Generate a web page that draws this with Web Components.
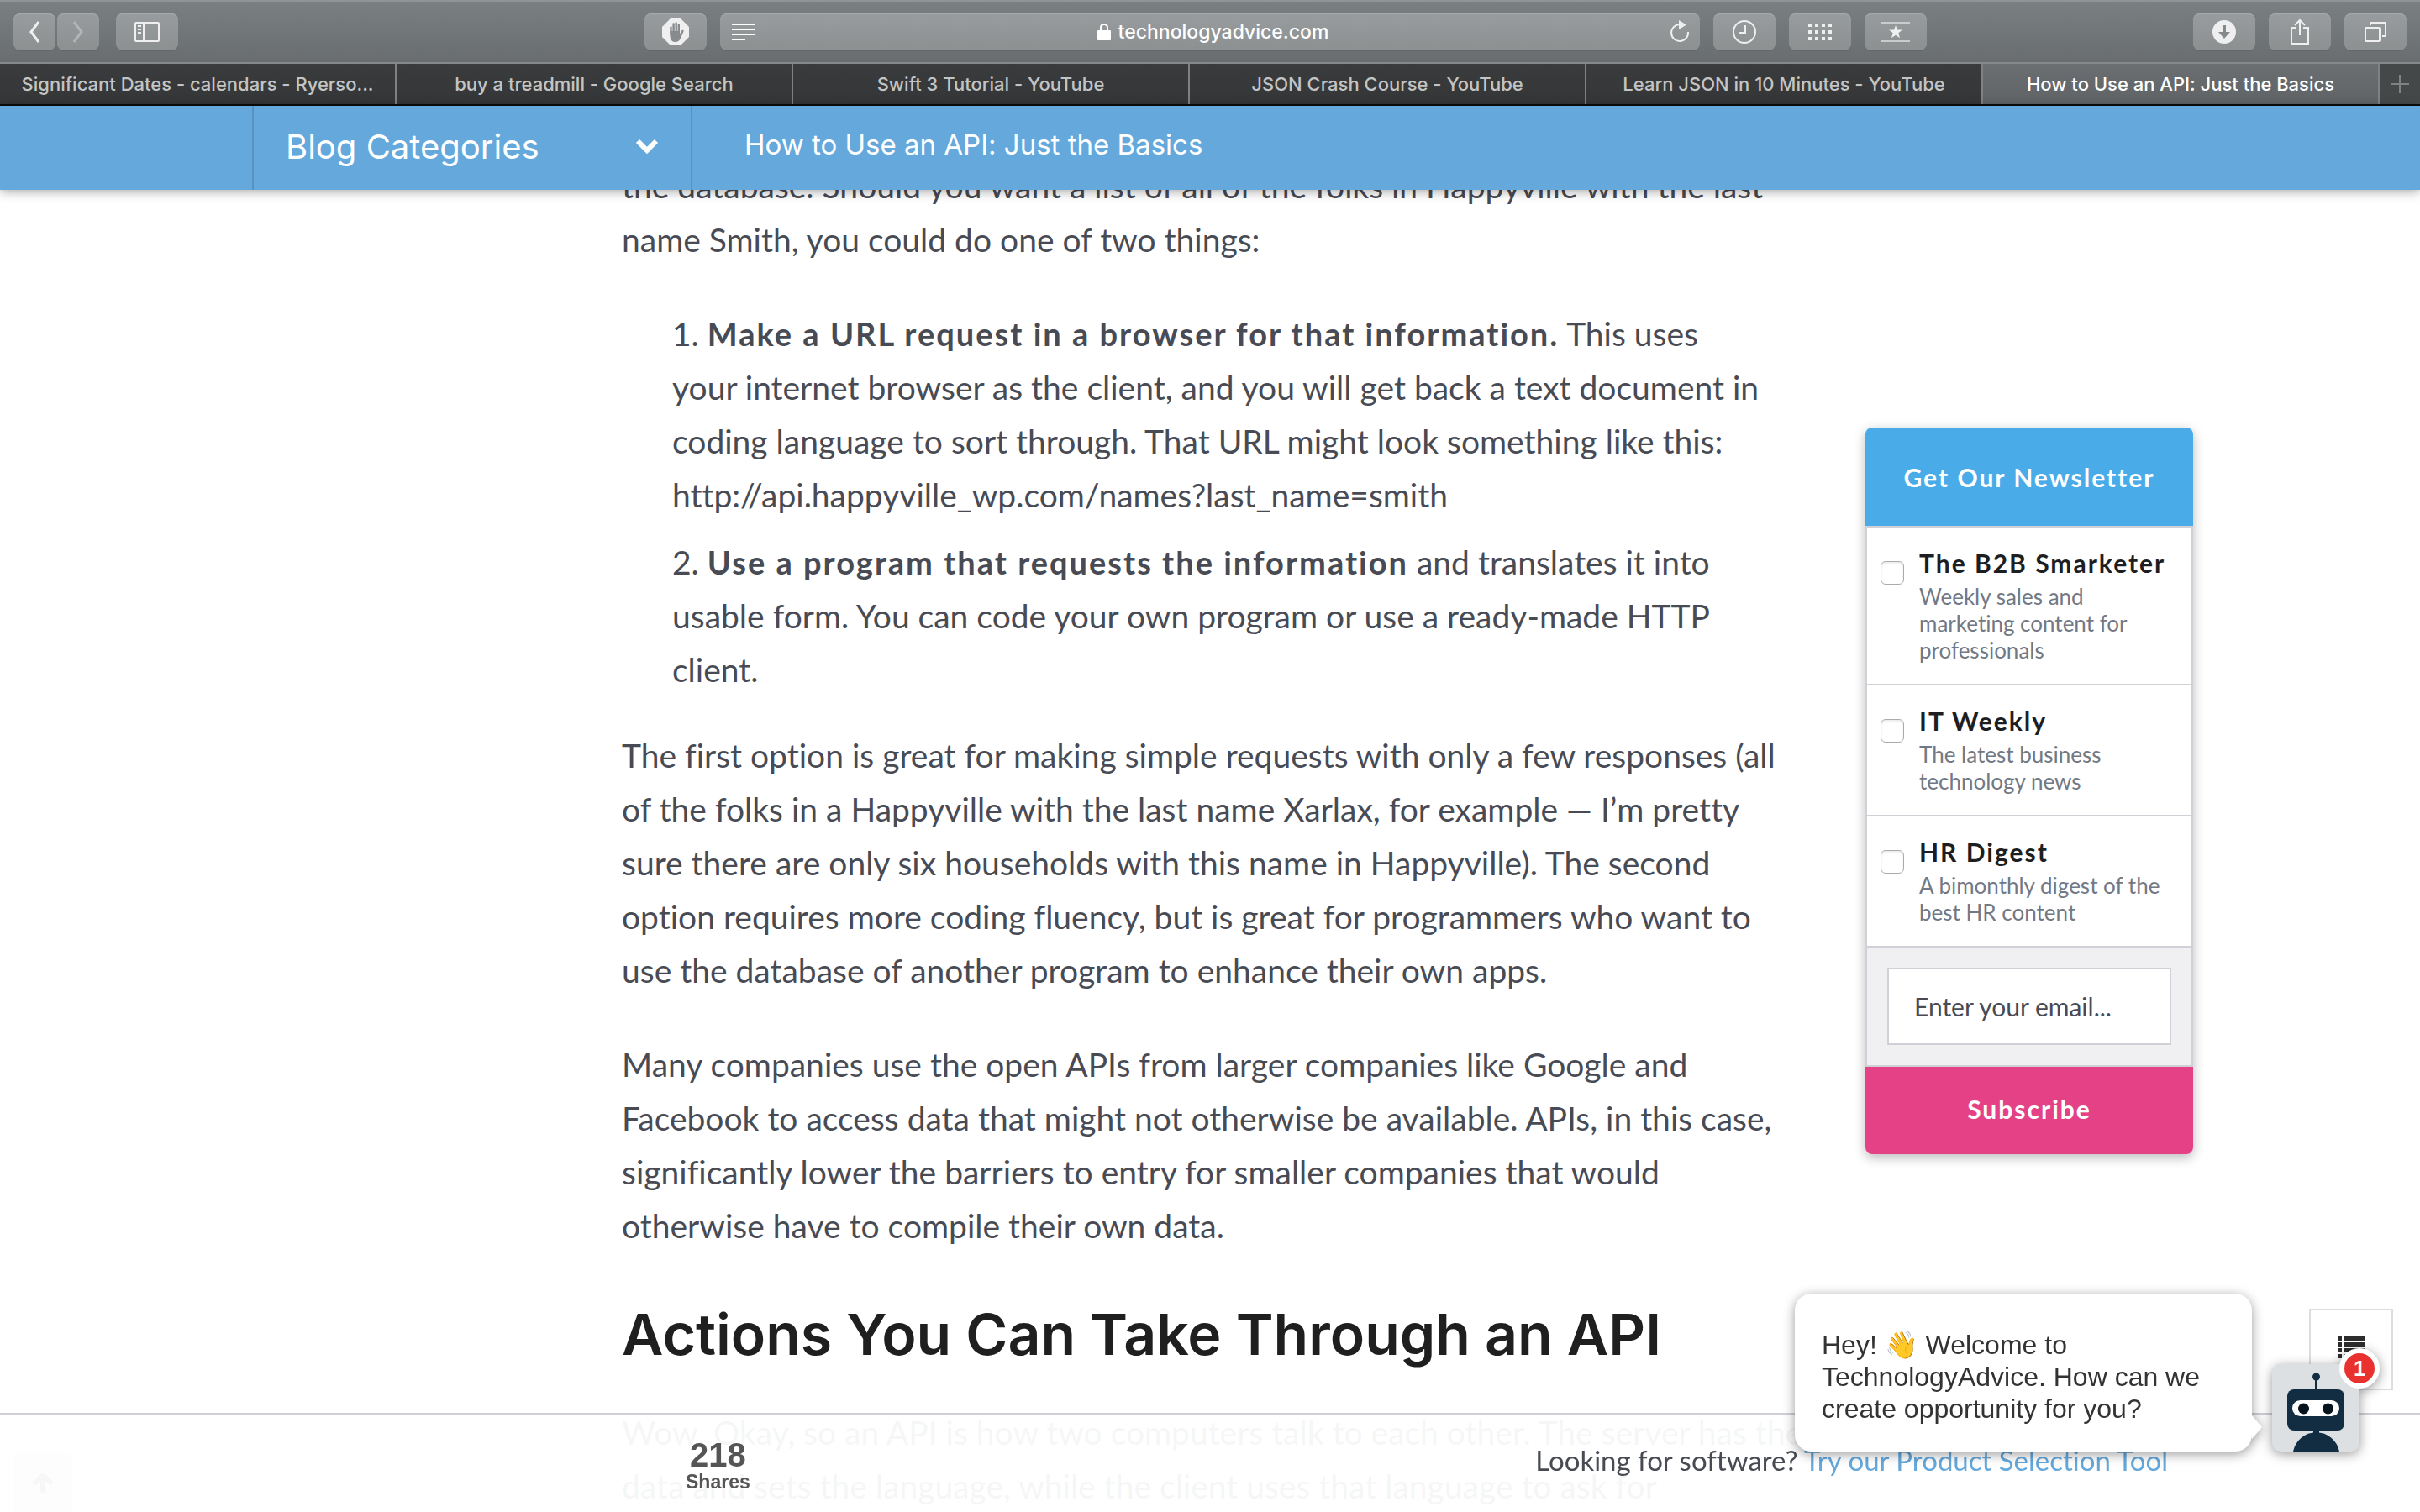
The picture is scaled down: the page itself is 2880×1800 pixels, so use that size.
<!DOCTYPE html>
<html lang="en">
<head>
<meta charset="utf-8">
<title>How to Use an API: Just the Basics</title>
<style>
html, body { margin: 0; height: 100%; }
body { font-family: Lato, "Liberation Sans", sans-serif; font-variant-ligatures: none; background: #fff; color: #484b54; overflow: hidden; }
</style>
</head>
<body>
<app-shell></app-shell>
<script>
const define = (name, html, setup) => customElements.define(name, class extends HTMLElement {
  connectedCallback() {
    if (this.shadowRoot) return;
    const root = this.attachShadow({ mode: 'open' });
    const t = document.createElement('template');
    t.innerHTML = typeof html === 'function' ? html(this) : html;
    root.append(t.content.cloneNode(true));
    if (setup) setup(this, root);
  }
});

define('app-shell', `
<style>
  :host { display: flex; flex-direction: column; height: 100vh; }
  main {
    flex: 1; min-height: 0; overflow: hidden; background: #fff;
    display: grid; grid-template-columns: minmax(0, 740fr) minmax(0, 1372fr) minmax(0, 108fr) 390px minmax(0, 270fr); align-items: start;
  }
  article-body { grid-column: 2; margin-top: -37px; }
  newsletter-card { grid-column: 4; margin-top: 283px; }
</style>
<browser-toolbar></browser-toolbar>
<tab-strip></tab-strip>
<site-nav></site-nav>
<main>
  <article-body></article-body>
  <newsletter-card></newsletter-card>
</main>
<share-bar></share-bar>
<toc-button></toc-button>
<chat-widget></chat-widget>
`);

define('tool-button', el => `
<style>
  :host { display: block; }
  button {
    display: flex; align-items: center; justify-content: center; box-sizing: border-box;
    width: ${el.hasAttribute('narrow') ? 50 : 74}px; height: 44px; padding: 0; border: 0; border-radius: 8px;
    color: #efefef; background: linear-gradient(#989c9e, #8c9091);
    box-shadow: inset 0 1px 0 #a6aaab, 0 1px 0 #63676a;
  }
  button:disabled { color: #b2b5b6; }
</style>
<button type="button" aria-label="${el.getAttribute('label')}" ${el.hasAttribute('off') ? 'disabled' : ''}><slot></slot></button>
`);

define('browser-toolbar', `
<style>
  :host {
    display: flex; align-items: center; box-sizing: border-box; height: 76px; padding: 0 16px;
    background: linear-gradient(#7a7f82, #696d6f); border-top: 2px solid #8f9497; border-bottom: 2px solid #85898b;
    font-family: Inter, sans-serif;
  }
  .group { display: flex; gap: 16px; }
  .pair { display: flex; gap: 2px; margin-right: 4px; }
  .center { flex: 1526; }
  .space-a { flex: 555; } .space-b { flex: 317; }
  .address {
    flex: 1; display: flex; align-items: center; justify-content: space-between; height: 44px; box-sizing: border-box;
    padding: 0 12px 0 14px; border-radius: 8px; color: #fff; font-size: 23px; font-weight: 500;
    background: linear-gradient(#989c9e, #8c9091); box-shadow: inset 0 1px 0 #a6aaab, 0 1px 0 #63676a;
  }
  .url { display: flex; align-items: center; gap: 8px; }
  svg { display: block; fill: none; stroke: currentColor; stroke-width: 2; overflow: visible; }
  .f { fill: currentColor; stroke: none; }
  button { border: 0; padding: 0; background: none; color: #efefef; }
</style>
<div class="group">
  <div class="pair">
    <tool-button narrow label="Back"><svg width="14" height="26" viewBox="0 0 14 26" style="stroke-width:3"><path d="M12 1 3 13l9 12"/></svg></tool-button>
    <tool-button narrow off label="Forward"><svg width="14" height="26" viewBox="0 0 14 26" style="stroke-width:3"><path d="M2 1l9 12-9 12"/></svg></tool-button>
  </div>
  <tool-button label="Sidebar"><svg width="30" height="24" viewBox="0 0 30 24"><rect x="1" y="1" width="28" height="22" rx="1"/><path d="M11 1v22M4 5h4M4 9h4M4 13h4"/></svg></tool-button>
</div>
<div class="space-a"></div>
<div class="group center">
  <tool-button label="Content blocker"><svg width="32" height="32" viewBox="0 0 32 32"><path class="f" d="M10 0h12l10 10v12L22 32H10L0 22V10z"/><path d="M10.500 18V10.500M13.600 17V6.500M16.700 17V5.500M19.800 17V7.500" stroke="#878b8d" stroke-width="2.400" stroke-linecap="round"/><path d="M9.300 15h11.700v3.500l2-3.700q1-1.600 2.200-1 .8.500.2 1.900l-3.400 7.800q-2 4.500-6.300 4.500-4.500 0-5.800-4.500-.6-2-.6-4.500z" fill="#878b8d" stroke="none"/></svg></tool-button>
  <div class="address">
    <svg width="28" height="20" viewBox="0 0 28 20"><path d="M0 1h28M0 7h28M0 13h28M0 19h16"/></svg>
    <div class="url"><svg width="18" height="20" viewBox="0 0 18 20"><rect class="f" x="1" y="8" width="16" height="12" rx="1"/><path d="M5 10V5q0-4 4-4t4 4v5"/></svg><span>technologyadvice.com</span></div>
    <button type="button" aria-label="Reload"><svg width="24" height="26" viewBox="0 0 24 26"><path d="M22 13A10 10 0 1 1 12 4"/><path class="f" d="M11-1l9 5.500-9 5.500z"/></svg></button>
  </div>
  <tool-button label="History"><svg width="28" height="28" viewBox="0 0 28 28"><circle cx="14" cy="14" r="13"/><path d="M15 6v9H8"/></svg></tool-button>
  <tool-button label="Top sites"><svg width="28" height="20" viewBox="0 0 28 20" stroke-dasharray="4 4" style="stroke-width:4"><path d="M0 2h28M0 10h28M0 18h28"/></svg></tool-button>
  <tool-button label="Favourites"><svg width="34" height="24" viewBox="0 0 34 24"><path d="M0 1h34M0 23h34" stroke="#c9cbcc"/><path class="f" d="M17 4l2 5.500h6l-4.700 3.700 1.700 6-5-3.500-5 3.500 1.700-6L9 9.500h6z"/></svg></tool-button>
</div>
<div class="space-b"></div>
<div class="group">
  <tool-button label="Downloads"><svg width="28" height="28" viewBox="0 0 28 28"><circle class="f" cx="14" cy="14" r="14"/><path d="M14 6v10" stroke="#85898b" stroke-width="4"/><path d="M7 14h14l-7 8z" fill="#85898b" stroke="none"/></svg></tool-button>
  <tool-button label="Share"><svg width="22" height="30" viewBox="0 0 22 30"><path d="M7 10H1v19h20V10h-6M11 19V1M5 7l6-6 6 6"/></svg></tool-button>
  <tool-button label="Show all tabs"><svg width="26" height="24" viewBox="0 0 26 24"><rect x="1" y="7" width="17" height="16" rx="1"/><path d="M7 4V1h18v16h-4"/></svg></tool-button>
</div>
`);

define('browser-tab', el => `
<style>
  :host {
    flex: 1; min-width: 0; display: flex; align-items: center; justify-content: center;
    border-right: 2px solid #7e8284; color: #c3c4c4; background: linear-gradient(#3a3b3d, #353638);
    font-size: 22px; font-weight: 500;
  }
  :host([active]) { background: linear-gradient(#6b6f71, #5f6365); color: #fff; }
  span { white-space: nowrap; }
</style>
<span><slot></slot></span>
`);

define('tab-strip', `
<style>
  :host { display: flex; height: 50px; box-sizing: border-box; border-bottom: 2px solid #0c0c0d; background: #454849; font-family: Inter, sans-serif; }
  button { width: 48px; border: 0; padding: 0; background: none; display: flex; align-items: center; justify-content: center; }
</style>
<browser-tab>Significant Dates - calendars - Ryerso...</browser-tab>
<browser-tab>buy a treadmill - Google Search</browser-tab>
<browser-tab>Swift 3 Tutorial - YouTube</browser-tab>
<browser-tab>JSON Crash Course - YouTube</browser-tab>
<browser-tab>Learn JSON in 10 Minutes - YouTube</browser-tab>
<browser-tab active>How to Use an API: Just the Basics</browser-tab>
<button type="button" aria-label="New tab"><svg width="22" height="22" viewBox="0 0 22 22" stroke="#7f8283" stroke-width="2"><path d="M11 0v22M0 11h22"/></svg></button>
`);

define('site-nav', `
<style>
  :host {
    display: flex; height: 100px; background: #64a8dc; color: #fff; position: relative; z-index: 1;
    box-shadow: 0 2px 12px rgba(0,0,0,.35); font-family: Inter, sans-serif;
  }
  .categories {
    margin-left: 300px; width: 524px; box-sizing: border-box; padding: 0 38px 4px 38px; border: 0; border-left: 2px solid #5793c1; border-right: 2px solid #5793c1;
    background: none; color: inherit; font: 400 40px Inter, sans-serif; display: flex; align-items: center; justify-content: space-between;
  }
  .title { margin-left: 62px; display: flex; align-items: center; padding-bottom: 8px; font-size: 33px; }
</style>
<button type="button" class="categories"><span>Blog Categories</span><svg width="28" height="18" viewBox="0 0 28 18" fill="none" stroke="#fff" stroke-width="6"><path d="M3 3l11 11L25 3"/></svg></button>
<div class="title">How to Use an API: Just the Basics</div>
`);

define('article-body', `
<style>
  :host { display: block; font-size: 39px; line-height: 64px; white-space: nowrap; }
  p { margin: 0 0 48px; }
  ol { list-style: none; margin: 0 0 38px; padding: 0 0 0 60px; }
  li { margin: 0 0 16px; }
  li:last-child { margin: 0; }
  b { font-size: 38px; font-weight: 700; letter-spacing: 2px; }
  h2 { margin: 0 0 36px; font: 600 68px/98px Inter, sans-serif; color: #1f1f1f; }
</style>
<p>the database. Should you want a list of all of the folks in Happyville with the last<br>name Smith, you could do one of two things:</p>
<ol>
  <li>1. <b>Make a URL request in a browser for that information.</b> This uses<br>your internet browser as the client, and you will get back a text document in<br>coding language to sort through. That URL might look something like this:<br>http://api.happyville_wp.com/names?last_name=smith</li>
  <li>2. <b>Use a program that requests the information</b> and translates it into<br>usable form. You can code your own program or use a ready-made HTTP<br>client.</li>
</ol>
<p>The first option is great for making simple requests with only a few responses (all<br>of the folks in a Happyville with the last name Xarlax, for example — I’m pretty<br>sure there are only six households with this name in Happyville). The second<br>option requires more coding fluency, but is great for programmers who want to<br>use the database of another program to enhance their own apps.</p>
<p>Many companies use the open APIs from larger companies like Google and<br>Facebook to access data that might not otherwise be available. APIs, in this case,<br>significantly lower the barriers to entry for smaller companies that would<br>otherwise have to compile their own data.</p>
<h2>Actions You Can Take Through an API</h2>
<p>Wow. Okay, so an API is how two computers talk to each other. The server has the<br>data and sets the language, while the client uses that language to ask for</p>
`);

define('newsletter-option', el => `
<style>
  :host { display: block; border: 2px solid #d1d0d6; border-top: 0; background: #fff; }
  label { display: flex; gap: 18px; padding: 18px 0 24px 16px; }
  input {
    appearance: none; flex: none; width: 28px; height: 28px; margin: 22px 0 0; box-sizing: border-box;
    border: 1px solid #ababab; border-radius: 6px; background: #fff; box-shadow: inset 0 2px 3px #ececec;
  }
  strong { display: block; font-size: 30px; line-height: 48px; letter-spacing: 2px; color: #1d1e22; white-space: nowrap; }
  small { display: block; font-size: 26px; line-height: 32px; color: #727984; white-space: nowrap; }
</style>
<label><input type="checkbox"><span><strong>${el.getAttribute('name')}</strong><small><slot></slot></small></span></label>
`);

define('newsletter-card', `
<style>
  :host { display: block; border-radius: 8px; box-shadow: 0 4px 14px rgba(0,0,0,.28); overflow: hidden; }
  header {
    height: 117px; display: flex; align-items: center; justify-content: center; background: #4aabe9; color: #fff;
    border-bottom: 2px solid #d1d0d6; font-size: 30px; font-weight: 700; letter-spacing: 2px;
  }
  .email { background: #f0f0f3; border: 2px solid #d1d0d6; border-top: 0; padding: 24px; }
  input {
    display: block; box-sizing: border-box; width: 100%; height: 92px; border: 2px solid #d1d0d6; border-radius: 0; background: #fff;
    padding: 0 30px; font: 30px Lato, sans-serif; color: #484b54;
  }
  input::placeholder { color: #484b54; opacity: 1; }
  button {
    display: block; width: 100%; height: 104px; border: 0; padding: 0 0 4px; background: #e44186; color: #fff;
    font: 700 30px Lato, sans-serif; letter-spacing: 2px;
  }
</style>
<header>Get Our Newsletter</header>
<newsletter-option name="The B2B Smarketer">Weekly sales and<br>marketing content for<br>professionals</newsletter-option>
<newsletter-option name="IT Weekly">The latest business<br>technology news</newsletter-option>
<newsletter-option name="HR Digest">A bimonthly digest of the<br>best HR content</newsletter-option>
<div class="email"><input type="email" aria-label="Email" placeholder="Enter your email..."></div>
<button type="button">Subscribe</button>
`);

define('share-bar', `
<style>
  :host {
    position: fixed; left: 0; right: 0; bottom: 0; height: 118px; box-sizing: border-box; z-index: 2;
    display: flex; align-items: flex-start; justify-content: space-between; padding: 0 300px 0 16px;
    border-top: 2px solid #d0cfd6; background: rgba(255,255,255,.95);
  }
  .left { display: flex; gap: 730px; }
  .up { margin-top: 46px; width: 70px; height: 70px; border: 0; padding: 0; border-radius: 8px 8px 0 0; background: #fdfdfd; display: flex; align-items: center; justify-content: center; }
  .count { padding-top: 26px; display: flex; flex-direction: column; align-items: center; font-family: "Liberation Sans", sans-serif; font-weight: 700; color: #555; }
  .count span { font-size: 40px; line-height: 44px; }
  .count small { font-size: 23px; line-height: 20px; }
  p { margin: 34px 0 0; font-size: 33px; line-height: 40px; white-space: nowrap; }
  a { color: #64a8dc; text-decoration: none; }
</style>
<div class="left">
  <button type="button" class="up" aria-label="Back to top"><svg width="24" height="24" viewBox="0 0 24 24" fill="none" stroke="#f7f7f7" stroke-width="6" stroke-linecap="round" stroke-linejoin="round"><path d="M12 21V4M3 12l9-9 9 9"/></svg></button>
  <div class="count"><span>218</span><small>Shares</small></div>
</div>
<p>Looking for software? <a href="#tool">Try our Product Selection Tool</a></p>
`);

define('toc-button', `
<style>
  :host { position: fixed; right: 32px; bottom: 145px; z-index: 3; }
  button { display: flex; align-items: center; justify-content: center; width: 100px; height: 97px; box-sizing: border-box; padding: 0 0 6px; border: 2px solid #dddddf; background: #fff; }
</style>
<button type="button" aria-label="Table of contents"><svg width="32" height="26" viewBox="0 0 32 26" stroke="#2d2d2d" stroke-width="5"><path d="M0 2.500h5M7 2.500h25M0 9.500h5M7 9.500h25M0 16.500h5M7 16.500h25M0 23.500h5M7 23.500h25"/></svg></button>
`);

define('chat-widget', `
<style>
  :host { position: fixed; right: 72px; bottom: 72px; z-index: 4; display: flex; align-items: flex-end; gap: 24px; font-family: "Liberation Sans", sans-serif; filter: drop-shadow(0 3px 7px rgba(0,0,0,.4)); }
  .bubble { position: relative; box-sizing: border-box; width: 544px; height: 188px; padding: 42px 0 0 32px; border-radius: 20px; background: #fff; color: #333; font-size: 32px; line-height: 38px; white-space: nowrap; }
  .bubble svg { position: absolute; left: 100%; bottom: 15px; }
  .bubble p { margin: 0; }
  .bot { position: relative; width: 104px; height: 104px; padding: 0; border: 0; background: none; }
  .bot svg { display: block; }
  .badge { position: absolute; right: -24px; top: -19px; box-sizing: border-box; width: 48px; height: 48px; border: 6px solid #fff; border-radius: 50%; background: #e9322f; color: #fff; font: 700 25px/36px "Liberation Sans", sans-serif; text-align: center; }
</style>
<div class="bubble"><p>Hey! 👋 Welcome to<br>TechnologyAdvice. How can we<br>create opportunity for you?</p><svg width="12" height="28" viewBox="0 0 12 28"><path d="M0 0l12 14L0 28z" fill="#fff"/></svg></div>
<button type="button" class="bot" aria-label="Open chat">
  <svg width="104" height="104" viewBox="0 0 104 104"><rect width="104" height="104" rx="10" fill="#dce0e3"/><g fill="#122c42"><circle cx="52.500" cy="15" r="4.500"/><path d="M51 15h3v18h-3z"/><rect x="18" y="30" width="68" height="49" rx="8"/><path d="M49 77h7v10h-7z"/><path d="M25 104a28 28 0 0 1 55 0z"/></g><rect x="24" y="43" width="56" height="19" rx="9.500" fill="#fff"/><circle cx="37.500" cy="53" r="6.500" fill="#07131d"/><circle cx="66.500" cy="53" r="6.500" fill="#07131d"/></svg>
  <span class="badge">1</span>
</button>
`);
</script>
</body>
</html>
